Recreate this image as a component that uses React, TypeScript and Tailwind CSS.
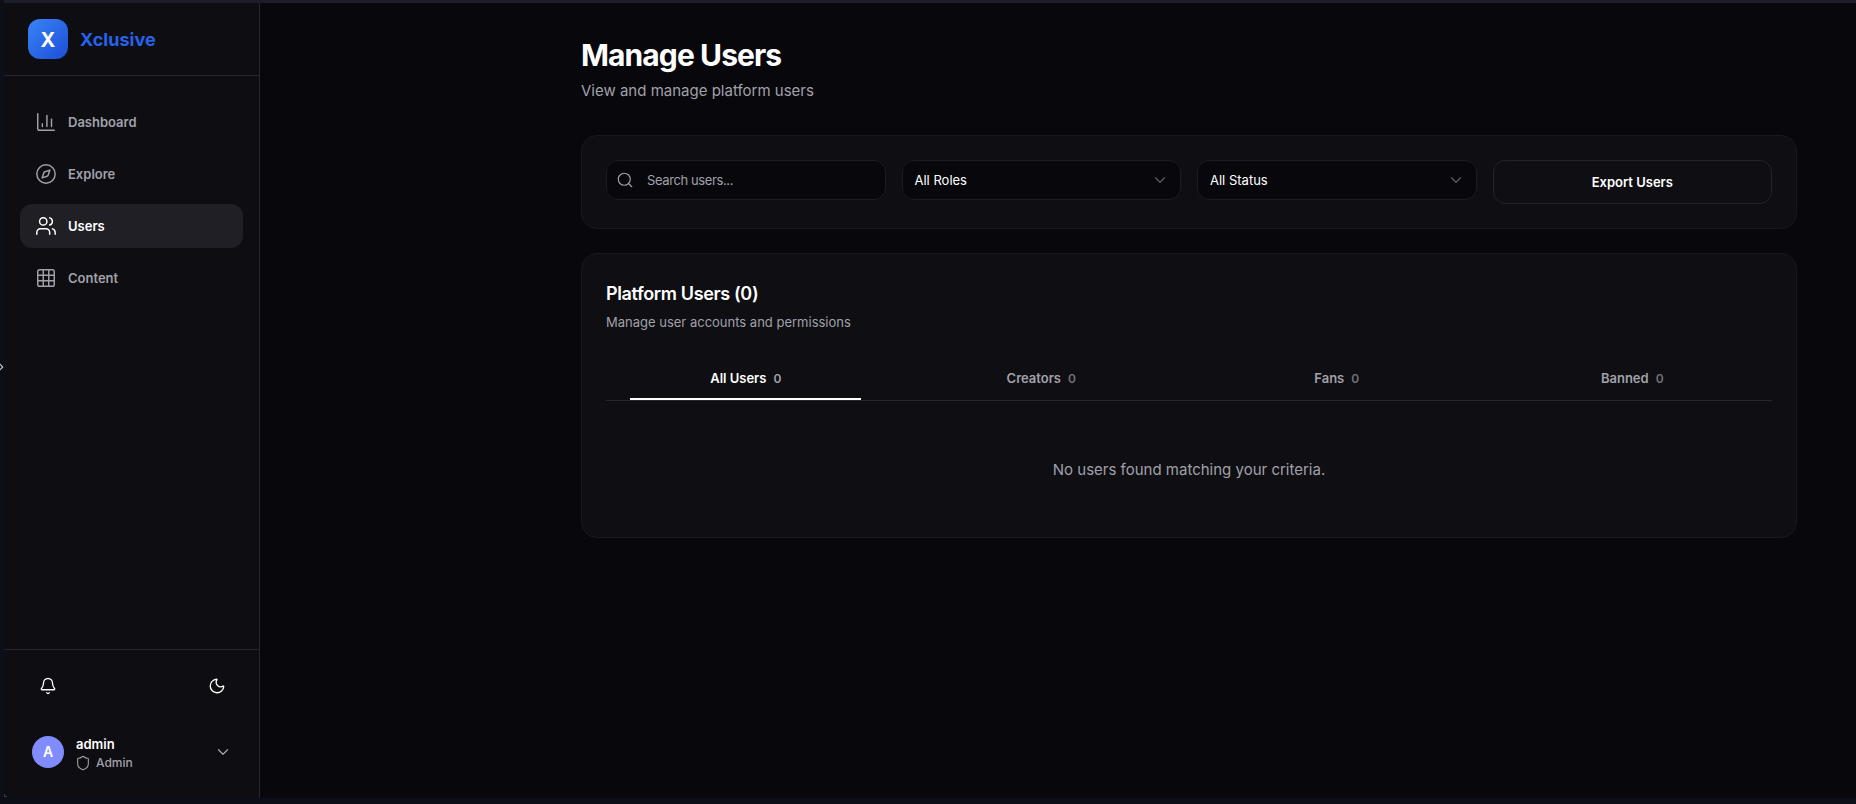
import React from 'react';
import { BarChart3, ChevronDown, ChevronRight, Compass, Bell, Moon, Search, Shield, Grid3x3, Users } from 'lucide-react';

const navItems = [
  { label: 'Dashboard', icon: BarChart3 },
  { label: 'Explore', icon: Compass },
  { label: 'Users', icon: Users, active: true },
  { label: 'Content', icon: Grid3x3 },
];

const tabs = [
  { label: 'All Users', active: true },
  { label: 'Creators' },
  { label: 'Fans' },
  { label: 'Banned' },
];

function SelectBox({ label }: { label: string }) {
  return (
    <div className="flex h-10 items-center justify-between rounded-xl border border-[#1c1c22] bg-[#07070c] pl-3 pr-[11px] text-[13px] text-white">
      <span className="pt-[2px]">{label}</span>
      <ChevronDown className="h-[18px] w-[18px] text-[#63636b]" strokeWidth={1.5} />
    </div>
  );
}

export default function App() {
  return (
    <div className="relative flex h-[804px] w-full flex-col overflow-hidden bg-[#0d0f18] pl-1 pb-[6px] font-['Inter',sans-serif] text-white antialiased">
      <ChevronRight className="absolute left-[-6px] top-[360px] h-[14px] w-[14px] text-[#c4c4cc]" />
      <div className="absolute left-[4px] top-[794px] h-[3px] w-[3px] border-b border-l border-[#3a3a40]" />
      <div className="h-[3px] shrink-0 bg-[#1e1e2a]" />
      <div className="flex min-h-0 flex-1 bg-[#07070c]">
        {/* Sidebar */}
        <aside className="flex w-[256px] shrink-0 flex-col border-r border-[#26262c] bg-[#0d0d12]">
          <div className="flex h-[73px] items-center gap-3 border-b border-[#26262c] pl-6">
            <div className="flex h-10 w-10 items-center justify-center rounded-xl bg-gradient-to-br from-[#3b82f6] to-[#1d4ed8] pt-[2px] text-xl font-bold text-white">
              X
            </div>
            <span className="pt-[2px] text-lg font-bold text-[#2563eb]">Xclusive</span>
          </div>

          <nav className="flex flex-col gap-2 px-4 pt-6">
            {navItems.map(item => {
              const Icon = item.icon;
              return (
                <div
                  key={item.label}
                  className={`flex h-11 items-center gap-[11px] rounded-xl pl-[15px] pr-4 text-[13px] font-semibold ${item.active ? 'bg-[#1f1f25] text-white' : 'text-[#a1a1aa]'}`}
                >
                  <Icon className="h-[22px] w-[22px]" strokeWidth={1.6} />
                  <span className="pt-[2px]">{item.label}</span>
                </div>
              );
            })}
          </nav>

          <div className="mt-auto flex items-center justify-between border-t border-[#26262c] pl-[35px] pr-[33px] pt-[27px]">
            <Bell className="h-[18px] w-[18px]" strokeWidth={1.75} />
            <Moon className="h-[18px] w-[18px]" strokeWidth={1.75} />
          </div>

          <div className="flex items-center gap-3 pb-[30px] pl-7 pr-[27px] pt-[41px]">
            <div className="flex h-8 w-8 items-center justify-center rounded-full bg-[#808cff] text-sm font-semibold text-white">
              A
            </div>
            <div className="h-8 flex-1 leading-none">
              <p className="mt-[2px] text-[13px] font-semibold text-white">admin</p>
              <p className="mt-[4px] -ml-px flex items-center gap-[5px] text-xs font-medium text-[#a1a1aa]">
                <Shield className="h-4 w-4" strokeWidth={1.6} />
                Admin
              </p>
            </div>
            <ChevronDown className="h-[18px] w-[18px] text-[#a1a1aa]" strokeWidth={1.75} />
          </div>
        </aside>

        {/* Main */}
        <main className="min-w-0 flex-1 pl-[321px] pr-[59px] pt-[34px]">
          <h1 className="text-3xl font-bold leading-9 tracking-[-0.03em] text-white">Manage Users</h1>
          <p className="mt-[7px] text-[15px] leading-[22px] text-[#a1a1aa]">View and manage platform users</p>

          <section className="mt-[33px] grid grid-cols-4 gap-4 rounded-2xl border border-[#18181e] bg-[#0e0e13] p-6">
            <div className="flex h-10 items-center gap-[13px] rounded-xl border border-[#1c1c22] bg-[#07070c] pl-[9px] pr-3 text-[13px] tracking-[-0.03em] text-[#a1a1aa]">
              <Search className="h-[18px] w-[18px]" strokeWidth={1.5} />
              <span className="pt-[2px]">Search users...</span>
            </div>
            <SelectBox label="All Roles" />
            <SelectBox label="All Status" />
            <button className="flex h-11 items-center justify-center rounded-xl border border-[#232329] bg-[#0e0e13] pt-[2px] text-[13px] font-semibold text-white">
              Export Users
            </button>
          </section>

          <section className="mt-6 rounded-2xl border border-[#18181e] bg-[#0e0e13] px-6 pt-[26px]">
            <h2 className="text-lg font-semibold leading-7 tracking-[-0.02em] text-white">Platform Users (0)</h2>
            <p className="mt-[4px] text-[13px] leading-5 text-[#a1a1aa]">Manage user accounts and permissions</p>

            <div className="mt-6 grid grid-cols-4 gap-4 border-b border-[#26262c]">
              {tabs.map(tab => (
                <div key={tab.label} className="flex justify-center">
                  <div className={`flex h-11 w-[231px] items-center justify-center gap-[7px] border-b-2 pt-[4px] text-[13px] font-semibold ${tab.active ? 'border-white text-white' : 'border-transparent text-[#a1a1aa]'}`}>
                    <span>{tab.label}</span>
                    <span className={`text-xs font-semibold ${tab.active ? 'text-[#a1a1aa]' : 'text-[#71717a]'}`}>0</span>
                  </div>
                </div>
              ))}
            </div>

            <p className="pb-[55px] pt-[57px] text-center text-[15px] leading-[24px] text-[#a1a1aa]">
              No users found matching your criteria.
            </p>
          </section>
        </main>
      </div>
    </div>
  );
}
